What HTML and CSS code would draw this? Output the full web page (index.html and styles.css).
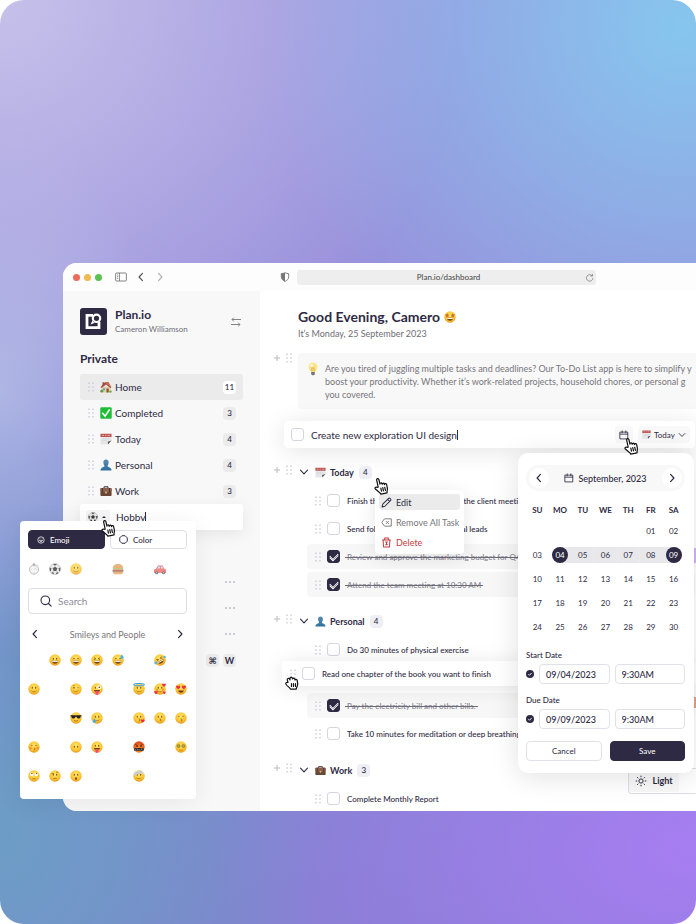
FILE: index.html
```html
<!DOCTYPE html>
<html lang="en">
<head>
<meta charset="utf-8">
<meta name="viewport" content="width=device-width, initial-scale=1">
<title>Plan.io</title>
<link rel="stylesheet" href="styles.css">
</head>
<body>
<svg class="sprite" aria-hidden="true">
  <defs>
    <radialGradient id="skin" cx=".5" cy=".35" r=".65"><stop offset="0" stop-color="#ffe56b"/><stop offset=".7" stop-color="#fbc32e"/><stop offset="1" stop-color="#e8941c"/></radialGradient>
    <radialGradient id="angry" cx=".5" cy=".75" r=".8"><stop offset="0" stop-color="#f59a2c"/><stop offset="1" stop-color="#d93f1c"/></radialGradient>
    <linearGradient id="blue" x1="0" y1="0" x2="0" y2="1"><stop offset="0" stop-color="#5a8db0"/><stop offset="1" stop-color="#2f6f9c"/></linearGradient>
  </defs>
  <symbol id="grip" viewBox="0 0 8 10"><g fill="#c3c3cc"><circle cx="2" cy="1.300" r=".8"/><circle cx="6" cy="1.300" r=".8"/><circle cx="2" cy="5" r=".8"/><circle cx="6" cy="5" r=".8"/><circle cx="2" cy="8.700" r=".8"/><circle cx="6" cy="8.700" r=".8"/></g></symbol>
  <symbol id="plus" viewBox="0 0 8 8"><path d="M4 1v6M1 4h6" stroke="#babac4" fill="none"/></symbol>
  <symbol id="down" viewBox="0 0 10 10"><path d="M1.500 3.200 5 6.800l3.500-3.600" fill="none" stroke="currentColor" stroke-width="1.100" stroke-linecap="round" stroke-linejoin="round"/></symbol>
  <symbol id="left" viewBox="0 0 10 10"><path d="M6.200 2 3.400 5l2.800 3" fill="none" stroke="currentColor" stroke-linecap="round" stroke-linejoin="round"/></symbol>
  <symbol id="right" viewBox="0 0 10 10"><path d="M3.800 2 6.600 5 3.800 8" fill="none" stroke="currentColor" stroke-linecap="round" stroke-linejoin="round"/></symbol>
  <symbol id="cal" viewBox="0 0 12 12"><path d="M1.500 2.500h9v8.200h-9zM1.500 5h9M3.800 1v2.500M8.200 1v2.500" fill="none" stroke="currentColor" stroke-linejoin="round" stroke-linecap="round"/></symbol>
  <symbol id="dots" viewBox="0 0 12 4"><g fill="#c1c0cd"><circle cx="2" cy="2" r="1.100"/><circle cx="6" cy="2" r="1.100"/><circle cx="10" cy="2" r="1.100"/></g></symbol>
  <symbol id="tick" viewBox="0 0 8 8"><circle cx="4" cy="4" r="4" fill="#2e2a43"/><path d="m2.300 4.100 1.200 1.200 2.200-2.400" fill="none" stroke="#fff" stroke-width=".9"/></symbol>
  <symbol id="hand" viewBox="0 0 18 20"><g transform="rotate(-12 9 10)" stroke="#111" stroke-width="1.200" stroke-linejoin="round" stroke-linecap="round"><path fill="#fff" d="M6 10.500V3.300c0-1.700 2.300-1.700 2.300 0V8c0-1.400 2.200-1.300 2.200.1v.5c0-1.300 2.200-1.100 2.200.2v.6c.1-1.200 2.100-1 2.100.4v3.400c0 2.200-1.300 3-1.300 4.800H7.200c-.2-1.700-2.800-4-4.300-6.200-.9-1.400.9-2.300 1.900-1.300z"/><path fill="none" d="M8.400 12v3.200M10.400 12v3.200M12.400 12v3.200"/></g></symbol>
  <symbol id="grab" viewBox="0 0 18 18"><g stroke="#111" stroke-width="1.200" stroke-linejoin="round" stroke-linecap="round"><path fill="#fff" d="M5 8.500 4.300 6c-.4-1.500 1.600-2.300 2.300-.9L7 6V4.300c0-1.500 2.100-1.500 2.300-.1l.2.800c.2-1.200 2.100-1.200 2.300.1l.2.900c.3-1 2-.9 2.200.3l.5 3.500c.3 2.200-1.300 3.300-1.500 5.400H7.400c-.5-1.700-2.800-2.700-4.300-4.700C2 9 3.600 8 5 8.500z"/><path fill="none" d="M8.500 9.500v3M10.500 9.500v3M12.500 9.500v3"/></g></symbol>

  <symbol id="today" viewBox="0 0 12 12"><path d="M.5 1h11v6.500L8 11.500H.5z" fill="#e6e6e8"/><path d="M.5.8h11v3.200H.5z" fill="#bd5450"/><path d="M2 2.400h2M5 2.400h1.500M7.500 2.400h2.500" stroke="#f1dcdb" stroke-width=".6"/><path d="M11.500 7.500 8 11.500 7.800 8.800z" fill="#55565c"/><path d="M2 6h7M2 7.500h5" stroke="#d4d4d8" stroke-width=".6"/></symbol>
  <symbol id="home" viewBox="0 0 12 12"><path d="M2 5.500h8.500V11.500H2z" fill="#e7cfa5"/><path d="M.5 6.300 5 1l6.500 5.200-1 .8L6 3.400 1.500 7z" fill="#a34b3c"/><path d="M5 1h3.500l3 5.200z" fill="#c9644c"/><path d="M2.500 1.200H4v2.500L2.500 5z" fill="#9a5140"/><path d="M6.500 7.500h2.200v4H6.500z" fill="#8c5130"/><path d="M3 7.300h2v2H3z" fill="#5ea3cf"/><circle cx="1.800" cy="10" r="1.600" fill="#589b3d"/><circle cx="10.500" cy="10.600" r="1.200" fill="#67a947"/></symbol>
  <symbol id="done" viewBox="0 0 12 12"><rect x=".3" y=".3" width="11.400" height="11.400" rx="1.200" fill="#1fbd35"/><path d="m2.700 6.300 2.400 2.900L9.300 2.900" fill="none" stroke="#fff" stroke-width="1.700" stroke-linecap="round"/></symbol>
  <symbol id="person" viewBox="0 0 12 12"><path d="M6 .5c2 0 2.800 1.500 2.600 3.200C8.400 5.600 7.600 6.500 7.500 7c0 1.200 4 1 4 4.500H.5C.5 8 4.500 8.200 4.500 7c-.1-.5-.9-1.400-1.100-3.300C3.200 2 4 .5 6 .5z" fill="url(#blue)"/></symbol>
  <symbol id="work" viewBox="0 0 12 12"><path d="M4 3.500V1.800h4v1.700" fill="none" stroke="#3d2b24"/><rect x=".4" y="3" width="11.200" height="8" rx="1" fill="#6a4636"/><path d="M.4 4c0-1 .5-1 1-1h9.200c.5 0 1 0 1 1v2.200L6 8 .4 6.200z" fill="#8a6150"/><path d="M2.500 3v4M9.500 3v4" stroke="#4a3128"/><rect x="5.200" y="6.500" width="1.600" height="2" fill="#d3b36e"/></symbol>
  <symbol id="ball" viewBox="0 0 12 12"><circle cx="6" cy="6" r="5.500" fill="#e6e6e6" stroke="#9a9a9a" stroke-width=".5"/><path d="m6 3.700 2.200 1.600-.8 2.600H4.600l-.8-2.600zM3.800 1h4.400L6 2.400zM.6 4.500l1.700.7L1.900 8.200l-1-.3zM11.400 4.500l-1.700.7.400 3 1-.3zM3 8.900l1.700.8.3 1.600-2.300-1zM9 8.900l-1.700.8-.3 1.600 2.300-1z" fill="#333"/><path d="M6 2v1.700M8.200 5.300l1.900.1M3.800 5.300l-1.900.1M4.600 7.900l-.8 1.800M7.400 7.900l.8 1.800" stroke="#777" stroke-width=".4"/></symbol>
  <symbol id="bulb" viewBox="0 0 12 14"><circle cx="6" cy="5" r="4.500" fill="#fbe58d"/><path d="M3 7.500h6L7.800 10.500H4.200z" fill="#f6dc7c"/><path d="M4.800 9V5.500l1.200 1 1.200-1V9" fill="none" stroke="#c99c3b" stroke-width=".6"/><path d="M4.200 10h3.600v2.500L6 13.500l-1.800-1z" fill="#77777b"/><circle cx="4.500" cy="3.500" r="1.300" fill="#fffbe2"/></symbol>
  <symbol id="watch" viewBox="0 0 12 12"><circle cx="6" cy="6.600" r="4.500" fill="#f6f6f6" stroke="#a5a5a5" stroke-width=".9"/><path d="M5 .8h2v1.300H5zM9.300 1.900l1.300 1.200M6 6.600l1.800-1.800M6 3.300v.7M6 9.200v.7M2.800 6.600h.7M8.500 6.600h.7" fill="#aaa" stroke="#999" stroke-width=".6"/></symbol>
  <symbol id="burger" viewBox="0 0 12 12"><path d="M.8 5C.8-.5 11.200-.5 11.200 5z" fill="#e2a35d"/><path d="M.8 8.600h10.400c0 3-2 2.700-5.200 2.700S.8 11.600.8 8.600z" fill="#e0a561"/><path d="M.6 6.800h10.800v1.900H.6z" fill="#9c5a43"/><path d="M.4 5h11.200L10 6.400 8.500 5.700 6 7 4 5.800 2 6.600z" fill="#a1c45f"/><path d="M1 6.300h10v.9H1z" fill="#ec7b62"/></symbol>
  <symbol id="car" viewBox="1 1 12 10"><path d="M.8 6.500 3 5.700 5 2.500h4.500l1.700 3.100 2 .9V10H.8z" fill="#ef6a69"/><path d="M4.300 5.500 5.500 3.500h1.700v2zM8 3.500h1.300l1.200 2H8z" fill="#b9e0f2"/><circle cx="3.600" cy="9.700" r="1.500" fill="#555"/><circle cx="10.500" cy="9.700" r="1.500" fill="#555"/><circle cx="3.600" cy="9.700" r=".6" fill="#ccc"/><circle cx="10.500" cy="9.700" r=".6" fill="#ccc"/></symbol>

  <symbol id="face" viewBox="0 0 12 12"><circle cx="6" cy="6" r="5.700" fill="url(#skin)"/></symbol>
  <symbol id="eyes" viewBox="0 0 12 12"><g fill="#7a4d16"><ellipse cx="4.300" cy="4.800" rx=".6" ry=".95"/><ellipse cx="7.700" cy="4.800" rx=".6" ry=".95"/></g></symbol>
  <symbol id="laugh" viewBox="0 0 12 12"><path d="M2.800 6.700h6.400c0 4-6.400 4-6.400 0z" fill="#7d4317"/><path d="M3.200 6.900h5.600v1H3.200z" fill="#fff"/></symbol>
  <symbol id="glad" viewBox="0 0 12 12"><use href="#face"/><use href="#eyes"/><use href="#laugh"/></symbol>
  <symbol id="grin" viewBox="0 0 12 12"><use href="#face"/><path d="M3 5.200c.4-1.100 1.500-1.100 1.900 0M7.100 5.200c.4-1.100 1.500-1.100 1.900 0" fill="none" stroke="#7a4d16" stroke-width=".8"/><use href="#laugh"/></symbol>
  <symbol id="squint" viewBox="0 0 12 12"><use href="#face"/><path d="m3 3.800 1.900.9-1.900.9M9 3.800l-1.900.9 1.900.9" fill="none" stroke="#7a4d16" stroke-width=".7"/><use href="#laugh"/></symbol>
  <symbol id="sweat" viewBox="0 0 12 12"><use href="#grin"/><path d="M9.700.4c1.400 1.400 2.300 2.500 1.800 3.800-.6 1-2.500.8-3-.2-.5-1.200.6-2.200 1.200-3.600z" fill="#47b4e8"/></symbol>
  <symbol id="rofl" viewBox="0 0 12 12"><g transform="rotate(-30 6 6)"><use href="#squint"/></g><circle cx="1.700" cy="9" r="1.400" fill="#54b5e5"/><circle cx="10.600" cy="3" r="1.200" fill="#54b5e5"/></symbol>
  <symbol id="smile" viewBox="0 0 12 12"><use href="#face"/><use href="#eyes"/><path d="M3.500 7.800c1.200 1.300 3.800 1.300 5 0" fill="none" stroke="#8f5c1d" stroke-width=".6"/></symbol>
  <symbol id="wink" viewBox="0 0 12 12"><use href="#face"/><ellipse cx="4" cy="4.700" rx=".7" ry=".9" fill="#7a4d16"/><path d="M7.200 5c.5-.8 1.500-.7 1.900.1M3 3c.5-.7 1.200-.7 1.700-.4M3.300 7.600c1.600 1.600 3.800 1.300 5.300-.4" fill="none" stroke="#8f5c1d" stroke-width=".6"/></symbol>
  <symbol id="tongue" viewBox="0 0 12 12"><use href="#face"/><use href="#eyes"/><path d="M3 7h6c0 3-6 3-6 0z" fill="#7d4317"/><path d="M4.400 8h3.200v2.200c0 2-3.200 2-3.200 0z" fill="#ee4d78"/></symbol>
  <symbol id="zany" viewBox="0 0 12 12"><use href="#tongue"/><circle cx="8.200" cy="4.300" r="2" fill="#fff"/><circle cx="8.300" cy="4.300" r=".8" fill="#553414"/></symbol>
  <symbol id="angel" viewBox="0 0 12 12"><use href="#smile"/><ellipse cx="6" cy="1.700" rx="5.300" ry="1.200" fill="none" stroke="#3fa1e0" stroke-width="1.100"/></symbol>
  <symbol id="heart" viewBox="0 0 12 12"><path d="M6 11C1 7.500 0 5 1 2.800 2.200.6 5 1 6 3.300 7 1 9.800.6 11 2.800 12 5 11 7.500 6 11z" fill="#ee2d3c"/></symbol>
  <symbol id="loved" viewBox="0 0 12 12"><use href="#smile"/><use href="#heart" x="8" y="0" width="4" height="4"/><use href="#heart" x="0" y="7.500" width="4" height="4"/><use href="#heart" x="8.500" y="8" width="3.500" height="3.500"/><circle cx="3" cy="6.500" r="1" fill="#f28b38"/><circle cx="9" cy="6.500" r="1" fill="#f28b38"/></symbol>
  <symbol id="hearteyes" viewBox="0 0 12 12"><use href="#face"/><use href="#heart" x="0.800" y="2" width="4.800" height="4.800"/><use href="#heart" x="6.400" y="2" width="4.800" height="4.800"/><path d="M3.200 7.600h5.600c-.5 3-5.100 3-5.600 0z" fill="#7a3414"/></symbol>
  <symbol id="cool" viewBox="0 0 12 12"><use href="#face"/><path d="M.5 3.300h11v1l-.9.300c-.2 2.700-3.600 2.600-4.200.2h-.8C5 7.200 1.600 7.300 1.400 4.600L.5 4.300z" fill="#24211f"/><path d="M4 8.500c1.300.9 3 .7 4.200-.4" fill="none" stroke="#8f5c1d" stroke-width=".7"/></symbol>
  <symbol id="tear" viewBox="0 0 12 12"><use href="#smile"/><path d="M3.200 6.500c1.400 1.500 2 2.700 1.500 3.700-.7 1-2.500.8-2.800-.2-.4-1.100.8-2 1.300-3.500z" fill="#43aee6"/></symbol>
  <symbol id="kiss" viewBox="0 0 12 12"><use href="#face"/><use href="#eyes"/><path d="M5.600 6.700c1.600 0 1.600 1.100.5 1.200 1.300.1 1.200 1.400-.4 1.300" fill="none" stroke="#8f5c1d" stroke-width=".7"/></symbol>
  <symbol id="kissheart" viewBox="0 0 12 12"><use href="#kiss"/><use href="#heart" x="7.600" y="6.800" width="4.400" height="4.400"/></symbol>
  <symbol id="kissshut" viewBox="0 0 12 12"><use href="#face"/><path d="M2.700 5c.5-1 1.500-1 2 0M7.200 5c.5-1 1.500-1 2 0M5.600 6.900c1.600 0 1.600 1 .5 1.100 1.300.1 1.200 1.300-.4 1.200" fill="none" stroke="#8f5c1d" stroke-width=".7"/></symbol>
  <symbol id="kissblush" viewBox="0 0 12 12"><use href="#kissshut"/><circle cx="2.500" cy="7" r="1.300" fill="#f0862e" opacity=".7"/><circle cx="9.500" cy="7" r="1.300" fill="#f0862e" opacity=".7"/></symbol>
  <symbol id="mute" viewBox="0 0 12 12"><use href="#face"/><use href="#eyes" y="1"/></symbol>
  <symbol id="curse" viewBox="0 0 12 12"><circle cx="6" cy="6" r="5.700" fill="url(#angry)"/><path d="m2.500 3.500 2.200 1.200M9.500 3.500 7.300 4.700" stroke="#5a1d0a" stroke-width=".8"/><circle cx="4" cy="5.300" r=".7" fill="#4a1a0a"/><circle cx="8" cy="5.300" r=".7" fill="#4a1a0a"/><rect x="1.200" y="7" width="9.600" height="2.800" rx=".8" fill="#2b2524"/><path d="M2.300 9.200l.8-1.500M4.300 7.700v1.500M5.600 8.500h1.200M8 9.200l.6-1.500.8 1.500" stroke="#ddd" stroke-width=".5"/></symbol>
  <symbol id="dizzy" viewBox="0 0 12 12"><use href="#face"/><g fill="#b9a33c" stroke="#857626" stroke-width=".6"><circle cx="3.600" cy="5" r="1.600"/><circle cx="8.400" cy="5" r="1.600"/></g><path d="M4 9.200c.7-1.200 1.300.7 2 0s1.300.5 2-.3" stroke="#8f5c1d" stroke-width=".6" fill="none"/></symbol>
  <symbol id="roll" viewBox="0 0 12 12"><use href="#face"/><g fill="#fff"><circle cx="3.600" cy="4.500" r="1.700"/><circle cx="8.400" cy="4.500" r="1.700"/></g><circle cx="3.900" cy="3.600" r=".7" fill="#5b3510"/><circle cx="8.700" cy="3.600" r=".7" fill="#5b3510"/><path d="M4.300 8.800h3.400" stroke="#8f5c1d" stroke-width=".7"/></symbol>
  <symbol id="brow" viewBox="0 0 12 12"><use href="#face"/><use href="#eyes"/><path d="M2.600 3.500h2.300M7 2.700c.6-.8 1.500-.8 2.200-.2M4.200 8.400h3.600" stroke="#8f5c1d" stroke-width=".7" fill="none"/></symbol>
  <symbol id="hush" viewBox="0 0 12 12"><use href="#face"/><use href="#eyes"/><ellipse cx="6" cy="8.600" rx="1" ry="1.300" fill="#7d4317"/></symbol>
  <symbol id="hurt" viewBox="0 0 12 12"><use href="#smile"/><path d="M.5 4.500C1.500-1 10.500-1 11.500 4.500L7 3.200.7 6z" fill="#d9d9d9"/><path d="m1.500 3.200 7-2M1 5l8-2.700" stroke="#aaa" stroke-width=".4"/></symbol>
  <symbol id="star" viewBox="0 0 12 12"><path d="m6 .8 1.500 3.500 3.800.3-2.900 2.500.9 3.700L6 8.800l-3.300 2 .9-3.700L.7 4.600l3.800-.3z" fill="#c9682a"/></symbol>
  <symbol id="starstruck" viewBox="0 0 12 12"><use href="#face"/><use href="#star" x=".6" y="1.700" width="5.200" height="5.200"/><use href="#star" x="6.200" y="1.700" width="5.200" height="5.200"/><use href="#laugh"/></symbol>
</svg>

<div class="stage">
  <div class="window">
    <header class="chrome">
      <div class="lights"><i class="red"></i><i class="amber"></i><i class="green"></i></div>
      <svg class="panes" viewBox="0 0 12 10"><rect x=".6" y="1" width="10.800" height="8" rx="1" fill="none" stroke="#777" stroke-width=".9"/><path d="M4.500 1v8M2 3h1.200M2 4.700h1.200M2 6.400h1.200" stroke="#777" stroke-width=".8"/></svg>
      <button class="plain" aria-label="Back"><svg class="i12 dim"><use href="#left"/></svg></button>
      <button class="plain" aria-label="Forward"><svg class="i12 faint"><use href="#right"/></svg></button>
      <svg class="shield" viewBox="0 0 10 10"><path d="M5 .8c1.400.6 2.600.8 3.700.8v3.200c0 2.200-1.500 3.700-3.700 4.600C2.800 8.500 1.300 7 1.300 4.800V1.600C2.400 1.600 3.600 1.400 5 .8z" fill="#fff" stroke="#777" stroke-width=".9"/><path d="M5 .8v8.600C2.800 8.500 1.300 7 1.300 4.800V1.600C2.400 1.600 3.600 1.400 5 .8z" fill="#777"/></svg>
      <div class="address"><span>Plan.io/dashboard</span><svg class="reload" viewBox="0 0 10 10"><path d="M8 3.200A3.600 3.600 0 1 0 8.800 5.600M8.300 1v2.400H6" fill="none" stroke="#777" stroke-width=".8"/></svg></div>
    </header>

    <div class="body">
      <aside class="sidebar">
        <div class="brand">
          <svg class="logo" viewBox="0 0 27 27"><rect width="27" height="27" rx="3" fill="#2e2a43"/><path d="M13 7.300H7v12.400h12V14" fill="none" stroke="#fff" stroke-width="2.800"/><circle cx="16.500" cy="10.300" r="3.700" fill="none" stroke="#fff" stroke-width="2.200"/><path d="M10.300 13.500 13 12.700l1.500 2.300-.5 3-3.500-.5z" fill="#2e2a43"/><path d="m12.500 12.500-2 4 4-1.500z" fill="#fff"/></svg>
          <div class="who"><strong>Plan.io</strong><span>Cameron Williamson</span></div>
          <button class="plain" aria-label="Switch account"><svg class="swap" viewBox="0 0 10 10"><path d="M10 2.500H1M2.800.7 1 2.500l1.800 1.800M0 7.500h9M7.200 5.700 9 7.500 7.200 9.300" fill="none" stroke="#777" stroke-width=".9"/></svg></button>
        </div>
        <h2>Private</h2>
        <nav class="lists">
          <a href="#" class="active"><svg class="grip"><use href="#grip"/></svg><svg class="i12"><use href="#home"/></svg><span>Home</span><b>11</b></a>
          <a href="#"><svg class="grip"><use href="#grip"/></svg><svg class="i12"><use href="#done"/></svg><span>Completed</span><b>3</b></a>
          <a href="#"><svg class="grip"><use href="#grip"/></svg><svg class="i12"><use href="#today"/></svg><span>Today</span><b>4</b></a>
          <a href="#"><svg class="grip"><use href="#grip"/></svg><svg class="i12"><use href="#person"/></svg><span>Personal</span><b>4</b></a>
          <a href="#"><svg class="grip"><use href="#grip"/></svg><svg class="i12"><use href="#work"/></svg><span>Work</span><b>3</b></a>
          <div class="naming">
            <button class="pick" aria-label="Choose emoji"><svg class="i10"><use href="#ball"/></svg><i></i></button>
            <input id="listname" aria-label="List name" value="Hobby"><i class="caret"></i>
          </div>
        </nav>
        <div class="more">
          <button class="plain" aria-label="More"><svg class="dots"><use href="#dots"/></svg></button>
          <button class="plain" aria-label="More"><svg class="dots"><use href="#dots"/></svg></button>
          <button class="plain" aria-label="More"><svg class="dots"><use href="#dots"/></svg></button>
          <div class="keys"><kbd>⌘</kbd><kbd>W</kbd></div>
        </div>
      </aside>

      <main class="main">
        <h1>Good Evening, Camero <svg class="i12"><use href="#starstruck"/></svg></h1>
        <p class="date">It’s Monday, 25 September 2023</p>

        <div class="block note-block">
          <div class="handles"><svg class="plus"><use href="#plus"/></svg><svg class="grip"><use href="#grip"/></svg></div>
          <div class="note"><svg class="bulb"><use href="#bulb"/></svg><p>Are you tired of juggling multiple tasks and deadlines? Our To-Do List app is here to simplify y<br>boost your productivity. Whether it’s work-related projects, household chores, or personal g<br>you covered.</p></div>
        </div>

        <div class="composer">
          <input type="checkbox" aria-label="Done">
          <input class="title" aria-label="New task" value="Create new exploration UI design"><i class="caret"></i>
          <div class="chips">
            <button class="chip" aria-label="Pick date"><svg class="i10"><use href="#cal"/></svg></button>
            <label class="chip"><svg class="i9"><use href="#today"/></svg><select aria-label="List"><option>Today</option></select><svg class="i8"><use href="#down"/></svg></label>
          </div>
        </div>

        <section class="block">
          <div class="handles"><svg class="plus"><use href="#plus"/></svg><svg class="grip"><use href="#grip"/></svg></div>
          <header><button class="plain" aria-label="Collapse"><svg class="i10"><use href="#down"/></svg></button><svg class="i11"><use href="#today"/></svg><h3>Today</h3><b>4</b></header>
          <ul>
            <li><svg class="grip"><use href="#grip"/></svg><label><input type="checkbox"><span>Finish the presentation slides for the client meeting</span></label></li>
            <li><svg class="grip"><use href="#grip"/></svg><label><input type="checkbox"><span>Send follow-up emails to potential leads</span></label></li>
            <li class="off"><svg class="grip"><use href="#grip"/></svg><label><input type="checkbox" checked><span>Review and approve the marketing budget for Q4</span></label></li>
            <li class="off"><svg class="grip"><use href="#grip"/></svg><label><input type="checkbox" checked><span>Attend the team meeting at 10:30 AM</span></label></li>
          </ul>
        </section>

        <section class="block">
          <div class="handles"><svg class="plus"><use href="#plus"/></svg><svg class="grip"><use href="#grip"/></svg></div>
          <header><button class="plain" aria-label="Collapse"><svg class="i10"><use href="#down"/></svg></button><svg class="i11"><use href="#person"/></svg><h3>Personal</h3><b>4</b></header>
          <ul>
            <li><svg class="grip"><use href="#grip"/></svg><label><input type="checkbox"><span>Do 30 minutes of physical exercise</span></label></li>
            <li class="slot"><div class="dragged"><svg class="grip"><use href="#grip"/></svg><label><input type="checkbox"><span>Read one chapter of the book you want to finish</span></label></div></li>
            <li class="off"><svg class="grip"><use href="#grip"/></svg><label><input type="checkbox" checked><span>Pay the electricity bill and other bills.</span></label></li>
            <li><svg class="grip"><use href="#grip"/></svg><label><input type="checkbox"><span>Take 10 minutes for meditation or deep breathing</span></label></li>
          </ul>
        </section>

        <section class="block last">
          <div class="handles"><svg class="plus"><use href="#plus"/></svg><svg class="grip"><use href="#grip"/></svg></div>
          <header><button class="plain" aria-label="Collapse"><svg class="i10"><use href="#down"/></svg></button><svg class="i11"><use href="#work"/></svg><h3>Work</h3><b>3</b></header>
          <ul>
            <li><svg class="grip"><use href="#grip"/></svg><label><input type="checkbox"><span>Complete Monthly Report</span></label></li>
          </ul>
        </section>

        <i class="tag"></i>
        <i class="avatar"></i>
        <div class="theme"><button><svg class="i12" viewBox="0 0 12 12"><circle cx="6" cy="6" r="2.100" fill="none" stroke="currentColor"/><path d="M6 .7v1.500M6 9.800v1.500M.7 6h1.500M9.800 6h1.500M2.200 2.200l1.100 1.100M8.700 8.700l1.100 1.100M2.200 9.800l1.100-1.100M8.700 3.300l1.100-1.100" stroke="currentColor"/></svg>Light</button></div>
      </main>
    </div>
  </div>

  <div class="menu" role="menu">
    <button role="menuitem" class="on"><svg class="i12" viewBox="0 0 12 12"><path d="m1.200 10.800.7-3L8.300 1.400c1-.9 3.200 1.100 2.300 2.300L4.200 10.100zM7.200 2.500l2.300 2.300" fill="none" stroke="currentColor" stroke-width="1.100" stroke-linejoin="round"/></svg>Edit</button>
    <button role="menuitem"><svg class="i12" viewBox="0 0 12 12"><path d="M3.800 2h7.400v8H3.800L.8 6z M5.500 4.500l3 3M8.500 4.500l-3 3" fill="none" stroke="currentColor" stroke-linejoin="round"/></svg>Remove All Task</button>
    <button role="menuitem" class="danger"><svg class="i12" viewBox="0 0 12 12"><path d="M1.200 3.200h9.600M4 3V1.200h4V3M2.300 3.500l.5 7.500h6.400l.5-7.500M4.600 5.500h2.800M4.600 8.500h2.800M6 5.500v3" fill="none" stroke="currentColor" stroke-width="1.100" stroke-linejoin="round"/></svg>Delete</button>
  </div>

  <div class="picker">
    <div class="tabs">
      <button class="on"><svg class="i8" viewBox="0 0 10 10"><circle cx="5" cy="5" r="4" fill="none" stroke="currentColor" stroke-width=".9"/><path d="M3 5.500c.4 2.200 3.600 2.200 4 0zM3.600 3.200v.9M6.400 3.200v.9" fill="none" stroke="currentColor" stroke-width=".8"/></svg>Emoji</button>
      <button><svg class="i9" viewBox="0 0 10 10"><path d="M3.200.8h3.600l2.400 2.400v3.600L6.800 9.200H3.200L.8 6.800V3.200z" fill="none" stroke="currentColor" stroke-width="1.100" stroke-linejoin="round"/></svg>Color</button>
    </div>
    <div class="grid kinds"><svg><use href="#watch"/></svg><svg><use href="#ball"/></svg><svg><use href="#smile"/></svg><i></i><svg><use href="#burger"/></svg><i></i><svg><use href="#car"/></svg></div>
    <label class="search"><svg class="i12" viewBox="0 0 12 12"><circle cx="5.300" cy="5.300" r="4.300" fill="none" stroke="currentColor" stroke-width="1.100"/><path d="m8.500 8.500 2.600 2.600" stroke="currentColor" stroke-width="1.200" stroke-linecap="round"/></svg><input type="search" placeholder="Search" aria-label="Search emoji"></label>
    <div class="pager"><button class="plain" aria-label="Previous"><svg class="i12"><use href="#left"/></svg></button><span>Smileys and People</span><button class="plain" aria-label="Next"><svg class="i12"><use href="#right"/></svg></button></div>
    <div class="grid faces">
      <i></i><svg><use href="#glad"/></svg><svg><use href="#grin"/></svg><svg><use href="#squint"/></svg><svg><use href="#sweat"/></svg><i></i><svg><use href="#rofl"/></svg><i></i>
      <svg><use href="#smile"/></svg><i></i><svg><use href="#wink"/></svg><svg><use href="#zany"/></svg><i></i><svg><use href="#angel"/></svg><svg><use href="#loved"/></svg><svg><use href="#hearteyes"/></svg>
      <i></i><i></i><svg><use href="#cool"/></svg><svg><use href="#tear"/></svg><i></i><svg><use href="#kissheart"/></svg><svg><use href="#kiss"/></svg><svg><use href="#kissshut"/></svg>
      <svg><use href="#kissblush"/></svg><i></i><svg><use href="#mute"/></svg><svg><use href="#tongue"/></svg><i></i><svg><use href="#curse"/></svg><i></i><svg><use href="#dizzy"/></svg>
      <svg><use href="#roll"/></svg><svg><use href="#brow"/></svg><svg><use href="#hush"/></svg><i></i><i></i><svg><use href="#hurt"/></svg>
    </div>
  </div>

  <div class="calendar">
    <div class="month"><button aria-label="Previous month"><svg class="i12"><use href="#left"/></svg></button><span><svg class="i10"><use href="#cal"/></svg>September, 2023</span><button aria-label="Next month"><svg class="i12"><use href="#right"/></svg></button></div>
    <table>
      <thead><tr><th>SU</th><th>MO</th><th>TU</th><th>WE</th><th>TH</th><th>FR</th><th>SA</th></tr></thead>
      <tbody>
        <tr><td></td><td></td><td></td><td></td><td></td><td>01</td><td>02</td></tr>
        <tr><td>03</td><td class="r start"><b>04</b></td><td class="r">05</td><td class="r">06</td><td class="r">07</td><td class="r">08</td><td class="r end"><b>09</b></td></tr>
        <tr><td>10</td><td>11</td><td>12</td><td>13</td><td>14</td><td>15</td><td>16</td></tr>
        <tr><td>17</td><td>18</td><td>19</td><td>20</td><td>21</td><td>22</td><td>23</td></tr>
        <tr><td>24</td><td>25</td><td>26</td><td>27</td><td>28</td><td>29</td><td>30</td></tr>
      </tbody>
    </table>
    <div class="when"><label for="start">Start Date</label><div><svg class="i8"><use href="#tick"/></svg><input id="start" value="09/04/2023"><input aria-label="Start time" value="9:30AM"></div></div>
    <div class="when"><label for="due">Due Date</label><div><svg class="i8"><use href="#tick"/></svg><input id="due" value="09/09/2023"><input aria-label="Due time" value="9:30AM"></div></div>
    <div class="actions"><button>Cancel</button><button class="save">Save</button></div>
  </div>

  <svg class="cursor c-hobby"><use href="#hand"/></svg>
  <svg class="cursor c-menu"><use href="#hand"/></svg>
  <svg class="cursor c-date"><use href="#hand"/></svg>
  <svg class="cursor c-grab"><use href="#grab"/></svg>
</div>
</body>
</html>
```
FILE: styles.css
```css
* { box-sizing: border-box; }
html { background: #fff; }
body { margin: 0; font-family: Lato, "Liberation Sans", sans-serif; font-size: 9px; font-variant-ligatures: none; color: #2e2a43; }
h1, h2, h3, p, ul { margin: 0; padding: 0; }
button, input, select { font: inherit; color: inherit; margin: 0; padding: 0; border: 0; background: none; outline: 0; }
svg { display: block; flex: none; overflow: visible; }
i { font-style: normal; }
a { color: inherit; text-decoration: none; }
.sprite { position: absolute; width: 0; height: 0; }
.i8 { width: 8px; height: 8px; }
.i9 { width: 9px; height: 9px; }
.i10 { width: 10px; height: 10px; }
.i11 { width: 11px; height: 11px; }
.i12 { width: 12px; height: 12px; }
.grip { width: 8px; height: 10px; }
.plus { width: 8px; height: 8px; }
.dim { color: #555; }
.faint { color: #b0b0b0; }
.caret { width: 1px; height: 10px; background: #2e2a43; }

.stage {
  position: relative; overflow: hidden; min-height: 100vh; padding: 263px 0 113px 63px; border-radius: 24px;
  background:
    radial-gradient(ellipse 420px 400px at 98% 3%, #86c6ee 0, rgba(134, 198, 238, .55) 45%, rgba(134, 198, 238, 0) 100%),
    radial-gradient(circle at 0 0, #c6c1ea 0, rgba(198, 193, 234, 0) 460px),
    radial-gradient(ellipse 160px 260px at 0 42%, rgba(176, 190, 230, .8) 0, rgba(176, 190, 230, 0) 100%),
    radial-gradient(ellipse 480px 300px at 100% 92%, #a77df2 0, rgba(167, 125, 242, 0) 100%),
    radial-gradient(ellipse 330px 420px at 0 90%, #6c9dc6 0, rgba(108, 157, 198, .7) 40%, rgba(108, 157, 198, 0) 100%),
    linear-gradient(#9b93de 0, #988fdb 30%, #8088d0 65%, #857fd0 100%);
}
.window { border-radius: 14px 0 0 14px; overflow: hidden; background: #fff; }

.chrome { display: flex; align-items: center; height: 28px; padding-left: 10px; background: #fdfdfd; }
.lights { display: flex; gap: 4px; margin-right: 13px; }
.lights i { width: 7px; height: 7px; border-radius: 50%; }
.red { background: #ec6a5e; }
.amber { background: #f0ba50; }
.green { background: #5dc151; }
.panes { width: 12px; height: 10px; margin-right: 8px; }
.chrome .plain { margin-right: 7px; }
.shield { width: 10px; height: 10px; margin: 0 7px 0 107px; }
.address { display: flex; align-items: center; justify-content: center; position: relative; width: 299px; height: 15px; padding-left: 4px; border-radius: 3px; background: #eee; font-size: 8px; color: #444; }
.address .reload { position: absolute; right: 2px; width: 9px; height: 9px; }

.body { display: grid; grid-template-columns: 197px minmax(0, 1fr); }
.sidebar { padding: 17px 17px 0; background: #f8f8f8; }
.brand { display: flex; align-items: center; gap: 8px; height: 27px; }
.logo { width: 27px; height: 27px; }
.who { display: flex; flex-direction: column; flex: 1; line-height: 14px; font-size: 8px; color: #706e78; }
.who strong { font-size: 12px; color: #2e2a43; }
.swap { width: 10px; height: 10px; margin-right: 2px; }
h2 { margin: 15px 0 7px; font-size: 12px; line-height: 17px; }
.lists a, .naming { display: flex; align-items: center; height: 26px; border-radius: 3px; font-size: 10px; }
.lists a { padding: 0 7px; }
.lists a.active { background: #ebebeb; }
.lists .i12 { margin: 0 3px 0 5px; }
.lists span { flex: 1; }
.lists b { width: 13px; height: 13px; border-radius: 4px; background: #ebebeb; font-size: 8px; line-height: 13px; text-align: center; font-weight: 500; }
.lists .active b { background: #fff; }
.naming { padding: 0 6px; background: #fff; box-shadow: 0 4px 16px rgba(0, 0, 0, .08); }
.pick { display: flex; align-items: center; gap: 4px; width: 24px; height: 14px; margin-right: 6px; padding-left: 2px; border-radius: 3px; background: #f5f5f5; }
.pick i { border: 2px solid transparent; border-top: 0; border-bottom-color: #2e2a43; }
.naming input { field-sizing: content; }
.more { display: flex; flex-direction: column; align-items: flex-end; padding: 39px 7px 0 0; }
.more .plain { display: flex; align-items: center; height: 26px; }
.dots { width: 12px; height: 4px; }
.keys { display: flex; align-items: center; gap: 4px; height: 26px; }
kbd { width: 13px; height: 13px; border-radius: 4px; background: #ebebeb; font: 700 9px/13px Lato, "DejaVu Sans", sans-serif; text-align: center; }

.main { position: relative; padding: 17px 1px 0 38px; }
h1 { display: flex; align-items: center; gap: 4px; font-size: 14px; line-height: 18px; }
.date { margin-bottom: 11px; font-size: 9px; line-height: 16px; color: #6e6d74; }
.block { position: relative; margin-bottom: 12px; }
.block.last { margin-bottom: 0; }
.handles { position: absolute; left: -25px; top: 5px; display: flex; align-items: center; gap: 4px; }
.note-block { margin-right: -1px; }
.note-block .handles { top: 0; }
.note { display: flex; overflow: hidden; gap: 6px; height: 56px; padding: 9px 0 0 9px; border-radius: 4px 0 0 4px; background: #f8f8f8; color: #77767b; line-height: 13px; white-space: nowrap; }
.bulb { width: 12px; height: 14px; }
.composer { display: flex; align-items: center; position: relative; height: 27px; margin: 0 0 12px -14px; padding: 0 5px 0 7px; border-radius: 4px; background: #fff; box-shadow: 0 3px 24px rgba(0, 0, 0, .11); font-size: 10px; }
.composer .title { field-sizing: content; margin-left: 7px; }
.chips { display: flex; gap: 5px; margin-left: auto; }
.chip { display: flex; align-items: center; gap: 3px; height: 17px; padding: 0 4px; border-radius: 4px; background: #f8f8f8; font-size: 8px; }
.chip select { appearance: none; }

input[type="checkbox"] { appearance: none; flex: none; display: grid; place-items: center; width: 13px; height: 13px; border: 1px solid #d5d5e0; border-radius: 3px; background: #fff; }
input[type="checkbox"]:checked { background: #2e2a43; border-color: #2e2a43; }
input[type="checkbox"]:checked::before { content: ""; width: 7px; height: 4px; border: solid #fff; border-width: 0 0 1px 1px; box-shadow: -1px 1px 0 -0px #fff; transform: translateY(-1px) rotate(-45deg); }

.block header { display: flex; align-items: center; height: 24px; }
.block header .plain { margin: 0 6px 0 1px; }
h3 { margin: 0 5px 0 4px; font-size: 9px; font-weight: 700; }
header b { width: 13px; height: 13px; border-radius: 4px; background: #eeeef5; font-size: 8px; line-height: 13px; text-align: center; font-weight: 500; }
ul { display: grid; gap: 3px; margin: 4px 0 0 9px; list-style: none; }
li, .dragged { display: flex; align-items: center; gap: 5px; height: 25px; padding-left: 7px; border-radius: 4px; font-size: 8px; font-weight: 500; white-space: nowrap; }
li label, .dragged label { display: flex; align-items: center; gap: 7px; }
.off { background: #f7f7f8; color: #85848e; }
.off span { position: relative; }
.off span::after { content: ""; position: absolute; left: -2px; right: -2px; top: 50%; height: 1px; background: #6d6b78; }
.slot { position: relative; }
.dragged { position: absolute; left: -25px; right: -1px; top: -4px; background: #fff; box-shadow: 0 2px 20px rgba(0, 0, 0, .1); }
.tag { position: absolute; right: 0; top: 257px; width: 6px; height: 15px; background: #d0b4f5; }
.avatar { position: absolute; right: -4px; top: 406px; width: 10px; height: 11px; border-radius: 3px; background: #e0a283; }
.theme { position: absolute; right: 0; bottom: 17px; width: 68px; height: 26px; border: 1px solid #dedee4; border-right: 0; border-radius: 4px 0 0 4px; }
.theme button { display: flex; align-items: center; justify-content: center; gap: 5px; width: 50px; height: 23px; border-radius: 3px; background: #f8f8f8; font-weight: 700; }

.menu { position: absolute; left: 375px; top: 490px; width: 89px; padding: 4px; border-radius: 4px; background: #fff; box-shadow: 0 4px 20px rgba(0, 0, 0, .1); display: grid; gap: 4px; font-size: 9px; }
.menu button { display: flex; align-items: center; gap: 4px; height: 16px; padding-left: 2px; border-radius: 3px; color: #77767b; white-space: nowrap; }
.menu .on { background: #ebebeb; color: #2e2a43; }
.menu .danger { color: #c23c41; }
.menu .i12 { width: 11px; height: 11px; }

.picker { position: absolute; left: 20px; top: 521px; width: 176px; height: 278px; padding: 9px 9px 0 8px; border-radius: 4px; background: #fff; box-shadow: 0 4px 24px rgba(0, 0, 0, .07); }
.tabs { display: grid; grid-template-columns: 1fr 1fr; gap: 5px; font-size: 8px; font-weight: 500; }
.tabs button { display: flex; align-items: center; gap: 5px; height: 19px; padding-left: 8px; border: 1px solid #dddde8; border-radius: 4px; }
.tabs .on { border-color: #2e2a43; background: #2e2a43; color: #fff; }
.grid { display: grid; grid-template-columns: repeat(8, 12px); justify-content: space-between; }
.grid svg { width: 12px; height: 12px; }
.kinds { margin: 14px 0 13px; opacity: .8; }
.search { display: flex; align-items: center; gap: 6px; height: 26px; padding-left: 11px; border: 1px solid #dddde8; border-radius: 4px; }
.search input { width: 100px; font-size: 10px; }
.search input::placeholder { color: #8b8a98; opacity: 1; }
.pager { display: flex; justify-content: space-between; align-items: center; height: 40px; padding: 0 1px; font-size: 9px; color: #77767b; }
.pager button { color: #2e2a43; }
.faces { row-gap: 17px; }
.faces svg, .faces i { height: 12px; }

.calendar { position: absolute; right: 2px; top: 453px; width: 176px; padding: 12px 9px 12px 8px; border-radius: 10px; background: #fff; box-shadow: 0 4px 28px rgba(0, 0, 0, .12); }
.month { display: flex; align-items: center; justify-content: space-between; height: 26px; padding: 0 3px; border-radius: 13px; background: #f8f8f8; font-size: 9px; font-weight: 500; }
.month button { display: grid; place-items: center; width: 20px; height: 20px; border-radius: 50%; background: #fff; }
.month span { display: flex; align-items: center; gap: 4px; }
table { width: 100%; margin-top: 10px; table-layout: fixed; border-collapse: collapse; text-align: center; font-size: 8px; }
th, td { height: 24px; padding: 0; }
th { height: 18px; font-weight: 700; }
.r { background: linear-gradient(#e8e8eb, #e8e8eb) center / 100% 16px no-repeat; }
.start { background-position: right; background-size: 50% 16px; }
.end { background-position: left; background-size: 50% 16px; }
td b { display: block; width: 16px; height: 16px; margin: auto; border-radius: 50%; background: #2e2a43; color: #fff; font-weight: 400; line-height: 16px; }
.when { margin-top: 10px; font-size: 8px; font-weight: 500; }
.when label { display: block; height: 15px; line-height: 12px; }
.when div { display: grid; grid-template-columns: 8px 1fr 1fr; align-items: center; gap: 5px; }
.when input { width: 100%; height: 20px; padding-left: 6px; border: 1px solid #e1e1ea; border-radius: 4px; font-size: 9px; font-weight: 500; }
.actions { display: grid; grid-template-columns: 1fr 1fr; gap: 8px; margin-top: 12px; }
.actions button { height: 20px; border: 1px solid #e1e1ea; border-radius: 4px; font-size: 8px; }
.actions .save { border-color: #2e2a43; background: #2e2a43; color: #fff; }

.cursor { position: absolute; width: 18px; height: 20px; pointer-events: none; }
.c-hobby { left: 99px; top: 518px; }
.c-menu { left: 372px; top: 476px; }
.c-date { left: 622px; top: 436px; }
.c-grab { left: 283px; top: 674px; height: 18px; }
```
